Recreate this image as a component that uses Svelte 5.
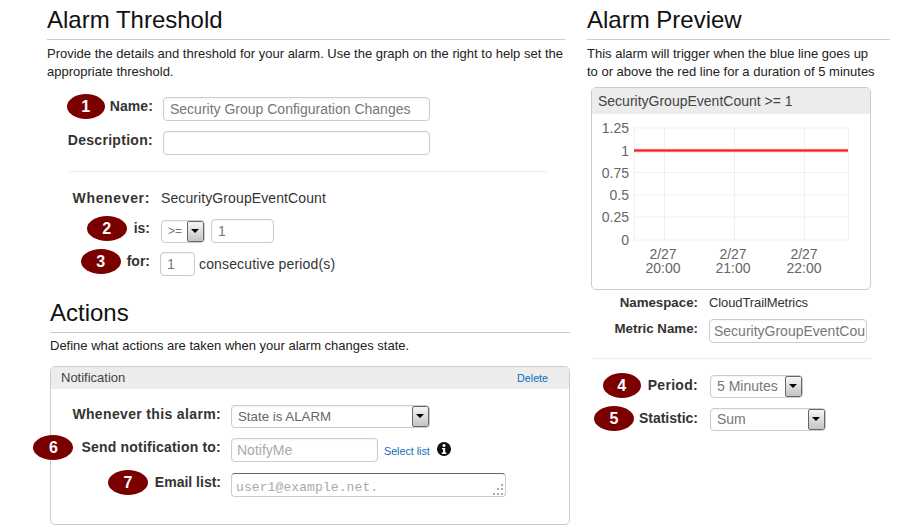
<script>
  const yTicks = [
    { label: '1.25', y: 128 },
    { label: '1', y: 150.5 },
    { label: '0.75', y: 172.5 },
    { label: '0.5', y: 195 },
    { label: '0.25', y: 217 },
    { label: '0', y: 240 }
  ];
  const xTicks = [
    { x: 84, label: '20:00' },
    { x: 154, label: '21:00' },
    { x: 225, label: '22:00' }
  ];
</script>

<main class="page">
  <div class="left">
    <section class="threshold">
      <h1>Alarm Threshold</h1>
      <p class="intro">Provide the details and threshold for your alarm. Use the graph on the right to help set the appropriate threshold.</p>
      <div class="row name-row">
        <div class="label w-name g5"><span class="badge narrow">1</span><b class="tight">Name:</b></div>
        <input class="field name-input" value="Security Group Configuration Changes" />
      </div>
      <div class="row desc-row">
        <div class="label w-name"><b>Description:</b></div>
        <input class="field name-input" />
      </div>
      <hr class="rule-a" />
      <div class="row when-row">
        <div class="label w-when"><b class="wide">Whenever:</b></div>
        <span class="value">SecurityGroupEventCount</span>
      </div>
      <div class="row is-row">
        <div class="label w-when"><span class="badge">2</span><b class="flat">is:</b></div>
        <div class="select s-op"><span class="sel-text">&gt;=</span><span class="arrow"></span></div>
        <input class="field s-num" value="1" />
      </div>
      <div class="row for-row">
        <div class="label w-when g6"><span class="badge">3</span><b class="flat">for:</b></div>
        <input class="field s-for" value="1" />
        <span class="value">consecutive period(s)</span>
      </div>
    </section>

    <section class="actions">
      <h1>Actions</h1>
      <p class="intro one">Define what actions are taken when your alarm changes state.</p>
      <div class="panel">
        <div class="panel-head"><span>Notification</span><a href="#delete">Delete</a></div>
        <div class="panel-body">
          <div class="row p1">
            <div class="label w-note"><b class="mid">Whenever this alarm:</b></div>
            <div class="select s-state"><span class="sel-text dark">State is ALARM</span><span class="arrow"></span></div>
          </div>
          <div class="row p2">
            <div class="label w-note g8"><span class="badge">6</span><b class="send">Send notification to:</b></div>
            <input class="field s-notify" placeholder="NotifyMe" />
            <a class="select-list" href="#list">Select list</a>
            <svg class="info" viewBox="0 0 14 14" width="14" height="14" aria-hidden="true">
              <circle cx="7" cy="7" r="7" fill="#111" />
              <circle cx="7" cy="3.4" r="1.5" fill="#fff" />
              <path d="M5 6h3.2v4.6H9.4V12H4.8v-1.4H6V7.3H5z" fill="#fff" />
            </svg>
          </div>
          <div class="row p3">
            <div class="label w-note"><span class="badge">7</span><b class="flat">Email list:</b></div>
            <div class="textarea">user1@example.net.<svg class="grip" viewBox="0 0 12 12" width="12" height="12" aria-hidden="true"><g fill="#aaa"><rect x="9" y="0" width="2" height="2"/><rect x="5" y="4" width="2" height="2"/><rect x="9" y="4" width="2" height="2"/><rect x="1" y="9" width="2" height="2"/><rect x="5" y="9" width="2" height="2"/><rect x="9" y="9" width="2" height="2"/></g></svg></div>
          </div>
        </div>
      </div>
    </section>
  </div>

  <aside class="right">
    <h1>Alarm Preview</h1>
    <p class="intro narrow-text">This alarm will trigger when the blue line goes up to or above the red line for a duration of 5 minutes</p>
    <div class="chart-card">
      <div class="chart-head">SecurityGroupEventCount &gt;= 1</div>
      <svg class="chart" width="278" height="175" viewBox="0 0 278 175" aria-label="Alarm preview chart">
        <g transform="translate(-592,-114)">
          <g stroke="#efefef" stroke-width="1" fill="none">
            {#each yTicks as t}
              <line x1="634" x2="848" y1={t.y} y2={t.y} />
            {/each}
            {#each [634, 664, 734, 804, 848] as x}
              <line x1={x + 0.5} x2={x + 0.5} y1="128" y2="240" />
            {/each}
          </g>
          <line x1="634" x2="848" y1="150.5" y2="150.5" stroke="#ff2a2a" stroke-width="3.5" opacity="0.35" />
          <line x1="634" x2="848" y1="150.5" y2="150.5" stroke="#ff1a1a" stroke-width="2" />
          <g class="tick" text-anchor="end">
            {#each yTicks as t}
              <text x="629" y={t.y + 5}>{t.label}</text>
            {/each}
          </g>
          <g class="tick" text-anchor="middle">
            {#each xTicks as t}
              <text x={t.x + 579} y="259">2/27</text>
              <text x={t.x + 579} y="273">{t.label}</text>
            {/each}
          </g>
        </g>
      </svg>
    </div>
    <div class="row ns-row">
      <div class="label w-right"><b>Namespace:</b></div>
      <span class="value small">CloudTrailMetrics</span>
    </div>
    <div class="row metric-row">
      <div class="label w-right"><b>Metric Name:</b></div>
      <input class="field s-metric" value="SecurityGroupEventCount" />
    </div>
    <hr class="rule-b" />
    <div class="row period-row">
      <div class="label w-right drop"><span class="badge narrow">4</span><b>Period:</b></div>
      <div class="select s-period"><span class="sel-text">5 Minutes</span><span class="arrow"></span></div>
    </div>
    <div class="row stat-row">
      <div class="label w-right drop g5"><span class="badge">5</span><b class="flat">Statistic:</b></div>
      <div class="select s-stat"><span class="sel-text">Sum</span><span class="arrow"></span></div>
    </div>
  </aside>
</main>

<style>
  :global(body) {
    margin: 0;
    background: #fff;
  }
  .page {
    width: 906px;
    height: 529px;
    overflow: hidden;
    display: flex;
    font-family: "Liberation Sans", Arial, sans-serif;
    color: #222;
    box-sizing: border-box;
  }
  .left {
    margin-left: 47px;
    width: 523px;
  }
  .right {
    margin-left: 17px;
    width: 303px;
  }
  h1 {
    font-size: 24px;
    line-height: 28px;
    font-weight: normal;
    color: #111;
    margin: 6px 0 0;
    padding-bottom: 5px;
    border-bottom: 1px solid #ccc;
  }
  .threshold h1 {
    width: 518px;
  }
  .intro {
    margin: 5px 0 0;
    font-size: 13px;
    line-height: 18px;
    color: #222;
  }
  .threshold .intro {
    width: 518px;
  }
  .narrow-text {
    width: 290px;
  }
  .actions {
    margin-left: 3px;
    margin-top: 23px;
  }
  .actions h1 {
    margin-top: 0;
  }
  .intro.one {
    margin-top: 4px;
  }
  .row {
    display: flex;
    align-items: flex-start;
  }
  .label {
    flex: none;
    display: flex;
    justify-content: flex-end;
    align-items: center;
    gap: 7px;
    height: 18px;
    font-size: 14px;
    letter-spacing: 0.3px;
    color: #333;
    line-height: 18px;
    white-space: nowrap;
  }
  .label.g5 { gap: 5px; }
  .label.g6 { gap: 6px; }
  .label.g8 { gap: 8px; }
  .label.drop { margin-top: 1px; }
  b.wide { letter-spacing: 0.65px; }
  b.mid { letter-spacing: 0.35px; }
  b.send { letter-spacing: 0.2px; }
  b.tight { letter-spacing: 0.1px; }
  b.flat { letter-spacing: 0; }
  .badge {
    flex: none;
    width: 40px;
    height: 25px;
    border-radius: 50%;
    background: #7a0000;
    color: #fff;
    font-weight: bold;
    font-size: 16px;
    line-height: 25px;
    text-align: center;
    letter-spacing: 0;
  }
  .badge.narrow { width: 38px; }
  .field {
    box-sizing: border-box;
    height: 24px;
    border: 1px solid #ccc;
    border-radius: 4px;
    background: #fff;
    font: 14px "Liberation Sans", Arial, sans-serif;
    color: #777;
    padding: 0 6px;
    margin: 0;
    outline: none;
    box-shadow: inset 0 1px 2px #0000000d;
  }
  .field::placeholder {
    color: #aaa;
    opacity: 1;
  }
  .w-name { width: 106px; margin-right: 10px; }
  .w-when { width: 103px; margin-right: 11px; }
  .for-row .w-when { margin-right: 10px; }
  .w-note { width: 170px; margin-right: 10px; }
  .w-right { width: 111px; margin-right: 12px; }
  .name-row { margin-top: 16px; }
  .name-input { width: 267px; }
  .desc-row { margin-top: 10px; }
  .rule-a {
    border: 0;
    border-top: 1px solid #eee;
    margin: 16px 0 0 21px;
    width: 479px;
  }
  .when-row { margin-top: 14px; align-items: center; }
  .value { font-size: 14px; line-height: 24px; color: #333; letter-spacing: 0.1px; }
  .value.small { font-size: 13px; letter-spacing: -0.1px; margin-left: -1px; }
  .is-row { margin-top: 9px; }
  .for-row { margin-top: 9px; }
  .for-row .value { margin-left: 4px; letter-spacing: 0.15px; }
  .select {
    box-sizing: border-box;
    display: flex;
    justify-content: space-between;
    border: 1px solid #ccc;
    border-radius: 4px;
    height: 23px;
    background: #fff;
    font-size: 14px;
    line-height: 21px;
    overflow: hidden;
    box-shadow: inset 0 1px 2px #0000000d;
  }
  .sel-text {
    padding-left: 6px;
    color: #777;
  }
  .sel-text.dark {
    color: #666;
    font-size: 13.3px;
  }
  .arrow {
    flex: none;
    box-sizing: border-box;
    width: 17px;
    height: 21px;
    border: 1px solid #666;
    border-radius: 2px;
    background: linear-gradient(#f6f6f6, #c4c4c4);
    position: relative;
  }
  .arrow::after {
    content: "";
    position: absolute;
    left: 3px;
    top: 7px;
    border: 4px solid transparent;
    border-top: 4px solid #000;
    border-bottom: 0;
  }
  .s-op { width: 44px; margin-top: 1px; }
  .s-op .sel-text { font-size: 12px; }
  .s-num { width: 63px; margin-left: 6px; }
  .s-for { width: 35px; }
  .panel {
    box-sizing: border-box;
    width: 520px;
    height: 159px;
    margin-top: 11px;
    border: 1px solid #ccc;
    border-radius: 5px;
  }
  .panel-head {
    height: 22px;
    background: #ececec;
    border-radius: 4px 4px 0 0;
    display: flex;
    justify-content: space-between;
    padding: 0 21px 0 10px;
    font-size: 13px;
    line-height: 22px;
    color: #444;
  }
  a {
    color: #0a6ebd;
    text-decoration: none;
    font-size: 10.7px;
  }
  .panel-body {
    padding-top: 16px;
  }
  .p2 { margin-top: 10px; }
  .p3 { margin-top: 10px; }
  .s-state { width: 199px; }
  .s-notify { width: 147px; padding-left: 5px; }
  .select-list { margin: 1px 0 0 6px; line-height: 24px; }
  .info { margin: 4px 0 0 7px; }
  .textarea {
    box-sizing: border-box;
    position: relative;
    width: 275px;
    height: 24px;
    overflow: hidden;
    border: 1px solid #ccc;
    border-top-color: #666;
    border-radius: 4px;
    font-family: "Liberation Mono", monospace;
    font-size: 13px;
    letter-spacing: 0.1px;
    line-height: 28px;
    padding-left: 4px;
    color: #aaa;
  }
  .grip {
    position: absolute;
    right: 1px;
    bottom: 0;
  }
  .chart-card {
    box-sizing: border-box;
    width: 280px;
    height: 203px;
    margin: 6px 0 0 4px;
    border: 1px solid #ccc;
    border-radius: 5px;
    overflow: hidden;
  }
  .chart-head {
    height: 26px;
    background: #ececec;
    padding-left: 6px;
    font-size: 14px;
    line-height: 26px;
    color: #444;
  }
  .chart {
    display: block;
  }
  .tick text {
    font-size: 14px;
    fill: #666;
  }
  .ns-row { margin-top: 1px; align-items: center; }
  .ns-row .label, .metric-row .label { font-size: 13.3px; letter-spacing: 0; }
  .metric-row { margin-top: 4px; }
  .metric-row .label { height: 18px; margin-top: 1px; }
  .s-metric { width: 158px; margin-left: -1px; padding: 0 1px 0 4px; }
  .rule-b {
    border: 0;
    border-top: 1px solid #eee;
    margin: 15px 0 0 5px;
    width: 280px;
  }
  .period-row { margin-top: 16px; }
  .stat-row { margin-top: 10px; }
  .s-period { width: 93px; }
  .s-stat { width: 116px; }
</style>
